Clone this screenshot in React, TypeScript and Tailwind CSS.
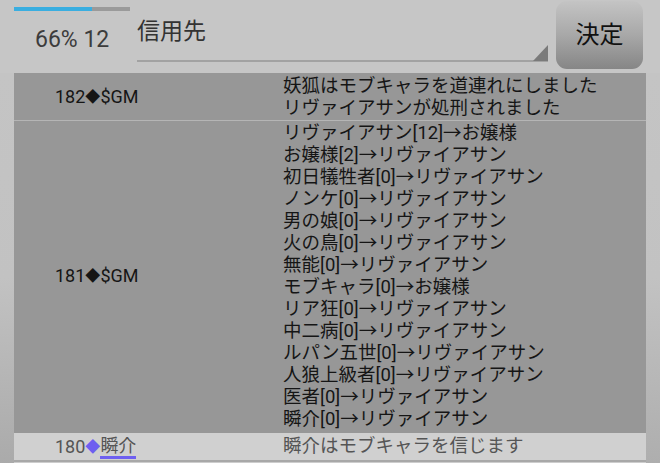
import React from "react";

const font = { fontFamily: 'Roboto, "Noto Sans CJK JP", sans-serif' };

type Row = {
  no: number;
  name: string;
  lines: string[];
  mine?: boolean;
};

const rows: Row[] = [
  {
    no: 182,
    name: "$GM",
    lines: ["妖狐はモブキャラを道連れにしました", "リヴァイアサンが処刑されました"],
  },
  {
    no: 181,
    name: "$GM",
    lines: [
      "リヴァイアサン[12]→お嬢様",
      "お嬢様[2]→リヴァイアサン",
      "初日犠牲者[0]→リヴァイアサン",
      "ノンケ[0]→リヴァイアサン",
      "男の娘[0]→リヴァイアサン",
      "火の鳥[0]→リヴァイアサン",
      "無能[0]→リヴァイアサン",
      "モブキャラ[0]→お嬢様",
      "リア狂[0]→リヴァイアサン",
      "中二病[0]→リヴァイアサン",
      "ルパン五世[0]→リヴァイアサン",
      "人狼上級者[0]→リヴァイアサン",
      "医者[0]→リヴァイアサン",
      "瞬介[0]→リヴァイアサン",
    ],
  },
  {
    no: 180,
    name: "瞬介",
    lines: ["瞬介はモブキャラを信じます"],
    mine: true,
  },
];

const pad = ["pt-[2px] pb-[1px] border-b border-[#b5b5b5]", "pt-[1px] pb-[3px]", "pt-[2px] pb-[1px]"];

export default function App() {
  return (
    <div className="w-[660px] h-[463px] overflow-hidden bg-[#c6c6c6] relative" style={font}>
      {/* Header */}
      <div className="flex h-[73px]">
        <div className="w-[137px] flex flex-col">
          <div className="ml-[14px] mt-[7px] w-[116px] h-[4px] bg-[#9a9a9a] flex">
            <div className="w-[78px] h-full bg-[#3aaee0]" />
          </div>
          <div className="pl-[35px] mt-[15px] text-[23px] leading-[28px] text-[#3c3c3c]">66% 12</div>
        </div>
        <div className="w-[411px] relative">
          <div className="mt-[17px] text-[23px] leading-[30px] text-[#333]">信用先</div>
          <div className="absolute left-0 right-0 top-[60px] h-[2px] bg-[#a2a2a2]" />
          <div className="absolute right-0 top-[45px] w-0 h-0 border-l-[15px] border-l-transparent border-b-[16px] border-b-[#7a7a7a]" />
        </div>
        <div className="ml-[8px] mt-[1px] w-[87px] h-[68px] rounded-[11px] bg-gradient-to-b from-[#c4c4c4] via-[#a8a8a8] to-[#868686] flex items-center justify-center text-[24px] text-[#111]">
          決定
        </div>
      </div>

      {/* Log table */}
      <div className="flex">
        <div className="w-[14px] bg-gradient-to-b from-[#c4c4c4] via-[#c2c2c2] to-[#a8a8a8]" />
        <div className="w-[632px] flex flex-col">
          {rows.map((r, i) => (
            <div
              key={r.no}
              className={`flex ${pad[i]} ${r.mine ? "bg-[#d0d0d0] text-[#555] border-b-2 border-[#a8a8a8]" : "bg-[#979797] text-[#151515]"}`}
            >
              <div className="w-[269px] pl-[41px] flex items-center text-[18px] leading-[22px]">
                <span>{r.no}</span>
                <span className={`text-[15px] ${r.mine ? "text-[#6e5ff0]" : ""}`}>◆</span>
                <span className={r.mine ? "border-b-[3px] border-[#6e5ff0] leading-[21px]" : ""}>{r.name}</span>
              </div>
              <div className="flex flex-col text-[18.5px] leading-[22px]">
                {r.lines.map((l, j) => (
                  <div key={j}>{l}</div>
                ))}
              </div>
            </div>
          ))}
          <div className="h-[20px] bg-[#cdcdcd]" />
        </div>
        <div className="w-[14px] bg-gradient-to-b from-[#c4c4c4] via-[#c2c2c2] to-[#acacac]" />
      </div>
    </div>
  );
}
